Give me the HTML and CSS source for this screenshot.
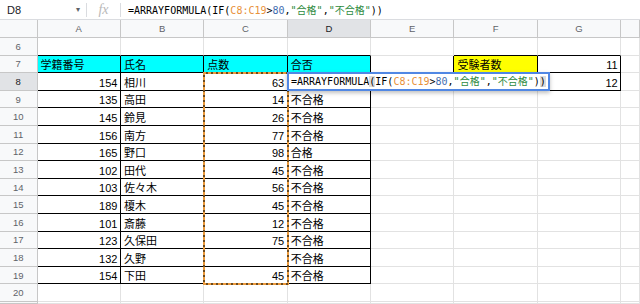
FILE: index.html
```html
<!DOCTYPE html>
<html>

<head>
  <meta charset="utf8">
  <link rel="stylesheet" href="styles.css">
  <title>成績表 - スプレッドシート</title>
</head>

<body>
  <div class="formula-bar">
    <div class="name-box"><span>D8</span><span class="caret">▾</span></div>
    <div class="sep"></div>
    <div class="fx">fx</div>
    <div class="sep"></div>
    <div class="formula">=ARRAYFORMULA(IF(<span class="ref">C8:C19</span>&gt;<span class="num">80</span>,<span class="str">"合格"</span>,<span class="str">"不合格"</span>))</div>
  </div>

  <div class="sheet">
    <table class="grid">
      <colgroup>
        <col class="rh"><col><col><col><col><col><col><col><col class="rest">
      </colgroup>
      <thead>
        <tr><th class="corner"></th><th>A</th><th>B</th><th>C</th><th class="sel">D</th><th>E</th><th>F</th><th>G</th><th></th></tr>
      </thead>
      <tbody>
        <tr><th>6</th><td class="bb"></td><td class="bb"></td><td class="bb"></td><td class="bb"></td><td></td><td class="bb"></td><td class="bb"></td><td></td></tr>
        <tr><th>7</th><td class="b cy">学籍番号</td><td class="b cy">氏名</td><td class="b cy">点数</td><td class="b cy">合否</td><td class="br"></td><td class="b ye">受験者数</td><td class="b n">11</td><td></td></tr>
        <tr><th class="sel">8</th><td class="b n">154</td><td class="b">相川</td><td class="b n">63</td><td class="b"></td><td class="br"></td><td class="b"></td><td class="b n">12</td><td></td></tr>
        <tr><th>9</th><td class="b n">135</td><td class="b">高田</td><td class="b n">14</td><td class="b">不合格</td><td></td><td></td><td></td><td></td></tr>
        <tr><th>10</th><td class="b n">145</td><td class="b">鈴見</td><td class="b n">26</td><td class="b">不合格</td><td></td><td></td><td></td><td></td></tr>
        <tr><th>11</th><td class="b n">156</td><td class="b">南方</td><td class="b n">77</td><td class="b">不合格</td><td></td><td></td><td></td><td></td></tr>
        <tr><th>12</th><td class="b n">165</td><td class="b">野口</td><td class="b n">98</td><td class="b">合格</td><td></td><td></td><td></td><td></td></tr>
        <tr><th>13</th><td class="b n">102</td><td class="b">田代</td><td class="b n">45</td><td class="b">不合格</td><td></td><td></td><td></td><td></td></tr>
        <tr><th>14</th><td class="b n">103</td><td class="b">佐々木</td><td class="b n">56</td><td class="b">不合格</td><td></td><td></td><td></td><td></td></tr>
        <tr><th>15</th><td class="b n">189</td><td class="b">榎木</td><td class="b n">45</td><td class="b">不合格</td><td></td><td></td><td></td><td></td></tr>
        <tr><th>16</th><td class="b n">101</td><td class="b">斎藤</td><td class="b n">12</td><td class="b">不合格</td><td></td><td></td><td></td><td></td></tr>
        <tr><th>17</th><td class="b n">123</td><td class="b">久保田</td><td class="b n">75</td><td class="b">不合格</td><td></td><td></td><td></td><td></td></tr>
        <tr><th>18</th><td class="b n">132</td><td class="b">久野</td><td class="b n"></td><td class="b">不合格</td><td></td><td></td><td></td><td></td></tr>
        <tr><th>19</th><td class="b n">154</td><td class="b">下田</td><td class="b n">45</td><td class="b">不合格</td><td></td><td></td><td></td><td></td></tr>
        <tr><th>20</th><td></td><td></td><td></td><td></td><td></td><td></td><td></td><td></td></tr>
        <tr class="last"><th></th><td></td><td></td><td></td><td></td><td></td><td></td><td></td><td></td></tr>
      </tbody>
    </table>

    <!-- copy range C8:C19 -->
    <div class="marquee"></div>

    <!-- in-cell editor for D8 -->
    <div class="editor">=ARRAYFORMULA<span class="match">(</span>IF(<span class="ref">C8:C19</span>&gt;<span class="num">80</span>,<span class="str">"合格"</span>,<span class="str">"不合格"</span>)<span class="match">)</span></div>
  </div>
</body>

</html>
```

FILE: styles.css
```css
body {
  margin: 0;
  overflow: hidden;
  background: #fff;
  color: #000;
  font-family: "Liberation Sans", Arial, "Noto Sans CJK JP", sans-serif;
}
.formula-bar {
  display: flex;
  align-items: center;
  height: 19px;
  border-bottom: 1px solid #dadce0;
  font-size: 11px;
  color: #202124;
}
.name-box {
  width: 86px;
  box-sizing: border-box;
  display: flex;
  justify-content: space-between;
  align-items: center;
  padding: 0 6px 0 7px;
}
.caret {
  font-size: 8px;
  color: #5f6368;
}
.sep {
  width: 1px;
  height: 14px;
  background: #dadce0;
}
.fx {
  width: 33px;
  text-align: center;
  font-family: "Liberation Serif", serif;
  font-style: italic;
  font-size: 14px;
  color: #b9b9b9;
}
.formula, .editor {
  font-family: "DejaVu Sans Mono", "Noto Sans CJK JP", monospace;
  font-size: 10px;
  white-space: nowrap;
  color: #000;
}
.formula {
  padding-left: 7px;
}
.ref {
  color: #e8913a;
}
.num {
  color: #3f6cb0;
}
.str {
  color: #2e8b3e;
}
.match {
  background: #dcdcdc;
}

.sheet {
  position: relative;
}
.grid {
  border-collapse: separate;
  border-spacing: 0;
  table-layout: fixed;
  width: 640px;
  font-size: 11px;
}
.grid col {
  width: 83.4px;
}
.grid col.rh {
  width: 37.5px;
}
.grid col.rest {
  width: auto;
}
.grid thead tr {
  height: 18px;
}
.grid tbody tr {
  height: 17.6px;
}
.grid tbody tr.last {
  height: 2px;
}
.grid th {
  padding: 0;
  font-weight: normal;
  font-size: 9.5px;
  color: #5f6368;
  background: #f8f9fa;
  border-right: 1px solid #c7c7c7;
  border-bottom: 1px solid #c7c7c7;
  text-align: center;
  vertical-align: middle;
}
.grid th.sel {
  background: #e1e3e6;
  color: #202124;
}
.grid td {
  padding: 0 2.5px 0 3px;
  border-right: 1px solid #e2e2e2;
  border-bottom: 1px solid #e2e2e2;
  vertical-align: bottom;
  line-height: 13px;
  white-space: nowrap;
  overflow: hidden;
}
.grid tr.last td {
  line-height: 0;
}
.grid td.b {
  border-right-color: #000;
  border-bottom-color: #000;
}
.grid td.bb {
  border-bottom-color: #000;
}
.grid td.br {
  border-right-color: #000;
}
.n {
  text-align: right;
}
.cy {
  background: #00ffff;
}
.ye {
  background: #ffff00;
}

.marquee {
  position: absolute;
  left: 203px;
  top: 52px;
  width: 86px;
  height: 213px;
  background:
    repeating-linear-gradient(90deg, #eb9a3c 0 3px, #6b4a1e 3px 5px) top / 100% 2px no-repeat,
    repeating-linear-gradient(90deg, #eb9a3c 0 3px, #6b4a1e 3px 5px) bottom / 100% 2px no-repeat,
    repeating-linear-gradient(0deg, #eb9a3c 0 3px, #6b4a1e 3px 5px) left / 2px 100% no-repeat,
    repeating-linear-gradient(0deg, #eb9a3c 0 3px, #6b4a1e 3px 5px) right / 2px 100% no-repeat;
}
.editor {
  position: absolute;
  left: 287px;
  top: 52.4px;
  width: 263px;
  height: 18.4px;
  box-sizing: border-box;
  padding: 2px 0 0 2px;
  line-height: 12px;
  background: #fff;
  border: 2px solid #5087e4;
  box-shadow: 0 2px 4px rgba(0, 0, 0, 0.25);
}
```
